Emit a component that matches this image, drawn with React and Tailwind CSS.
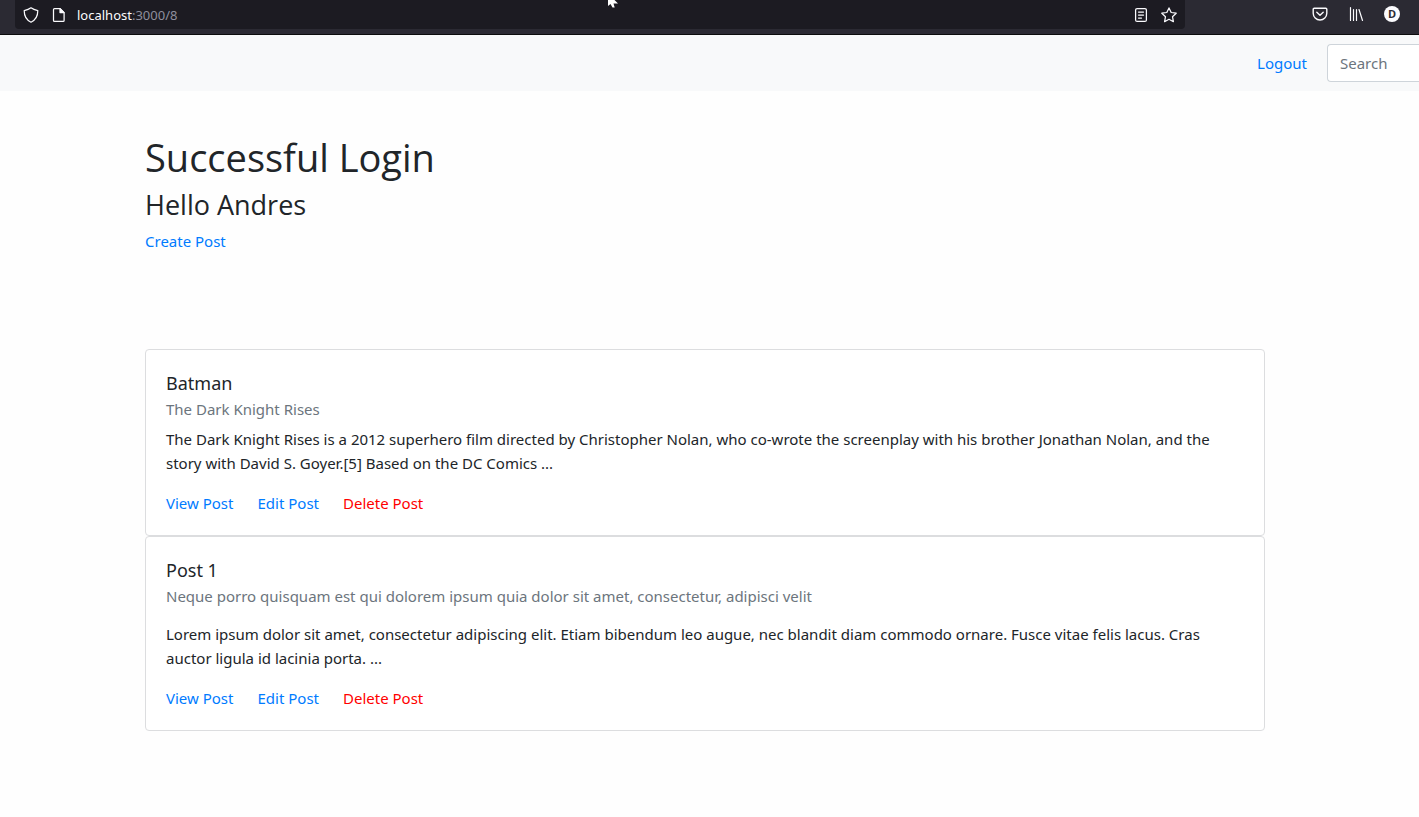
import React from "react";

const posts = [
  {
    title: "Batman",
    subtitle: "The Dark Knight Rises",
    body: "The Dark Knight Rises is a 2012 superhero film directed by Christopher Nolan, who co-wrote the screenplay with his brother Jonathan Nolan, and the story with David S. Goyer.[5] Based on the DC Comics ...",
    gap: "mt-2",
  },
  {
    title: "Post 1",
    subtitle:
      "Neque porro quisquam est qui dolorem ipsum quia dolor sit amet, consectetur, adipisci velit",
    body: "Lorem ipsum dolor sit amet, consectetur adipiscing elit. Etiam bibendum leo augue, nec blandit diam commodo ornare. Fusce vitae felis lacus. Cras auctor ligula id lacinia porta. ...",
    gap: "mt-4",
  },
];

function Icon({ children, ...props }) {
  return (
    <svg
      viewBox="0 0 16 16"
      className="size-4 shrink-0"
      fill="none"
      stroke="#fbfbfe"
      strokeWidth="1.25"
      strokeLinecap="round"
      strokeLinejoin="round"
      aria-hidden="true"
      {...props}
    >
      {children}
    </svg>
  );
}

function BrowserBar() {
  return (
    <header className="relative flex h-[35px] items-start border-b border-[#0c0c0d] bg-[#2b2a33] pl-[15px] pr-[19px]">
      <div className="flex h-[29px] grow items-center rounded-b bg-[#1c1b22] pl-2 pr-2">
        <Icon>
          <path d="M8 .8c2 1.500 4 2.200 6.800 2.800 0 5-1.800 9.400-6.800 11.600C3 13 1.200 8.600 1.200 3.600 4 3 6 2.300 8 .8z" />
        </Icon>
        <Icon className="ml-3 size-4 shrink-0">
          <path d="M3.500 1.600h5.600l4 4v7.800a1 1 0 0 1-1 1H3.500a1 1 0 0 1-1-1V2.600a1 1 0 0 1 1-1z" />
          <path d="M9 1.600v4h4z" fill="#fbfbfe" />
        </Icon>
        <span className="ml-2.5 font-['Noto_Sans','Open_Sans',sans-serif] text-[13px] text-[#8f8f9d]">
          <span className="text-[#fbfbfe]">localhost</span>:3000/8
        </span>
        <button type="button" aria-label="Reader view" className="ml-auto">
          <Icon>
            <rect x="2.600" y="1.600" width="10.800" height="12.800" rx="1.500" />
            <path d="M5.500 5h5M5.500 8h5M5.500 11h3" />
          </Icon>
        </button>
        <button type="button" aria-label="Bookmark page" className="ml-3">
          <Icon>
            <path d="M8 .9l2.200 4.600 5 .7-3.700 3.500.9 5L8 12.300l-4.400 2.400.9-5L.8 6.200l5-.7z" />
          </Icon>
        </button>
      </div>
      <div className="ml-[127px] flex h-7 items-center gap-5">
        <button type="button" aria-label="Save to Pocket">
          <Icon strokeWidth="1.400">
            <path d="M2.200 2.200h11.600a1 1 0 0 1 1 1v4a6.800 6.800 0 0 1-13.600 0v-4a1 1 0 0 1 1-1z" />
            <path d="M4.800 6.200L8 9.300l3.200-3.100" />
          </Icon>
        </button>
        <button type="button" aria-label="Library">
          <Icon strokeWidth="1.200">
            <path d="M2.500 1.500v13M5.500 3.500v11M8.500 3.500v11M11 3.500l3.500 11" />
          </Icon>
        </button>
        <button
          type="button"
          className="flex size-4 items-center justify-center rounded-full bg-[#fbfbfe] font-['Open_Sans',sans-serif] text-[11px] font-bold text-[#2b2a33]"
        >
          D
        </button>
      </div>
      <svg
        viewBox="0 0 12 8"
        className="absolute left-[607px] top-0 h-2 w-3"
        aria-hidden="true"
      >
        <path
          d="M1 0v6l2.500-2L5.500 7.500h2.200L6.500 3.500H11L7.500 0z"
          fill="#fff"
        />
      </svg>
    </header>
  );
}

function PostCard({ post }) {
  return (
    <article className="rounded border border-[#dcdddf] bg-white p-5">
      <h5 className="mb-1 text-[18px] leading-[26px]">{post.title}</h5>
      <h6 className="leading-[19px] text-[#6c757d]">{post.subtitle}</h6>
      <p className={post.gap}>{post.body}</p>
      <div className="mt-4 flex gap-6">
        <a href="#view" className="text-[#007bff]">View Post</a>
        <a href="#edit" className="text-[#007bff]">Edit Post</a>
        <a href="#delete" className="text-[#ff0000]">Delete Post</a>
      </div>
    </article>
  );
}

export default function App() {
  return (
    <div className="min-h-screen bg-[#fefefe] font-['Noto_Sans','Open_Sans',sans-serif] text-[15px] leading-6 text-[#212529]">
      <BrowserBar />
      <nav className="flex h-14 items-center justify-end overflow-hidden bg-[#f8f9fa]">
        <a href="#logout" className="mr-5 text-[#007bff]">Logout</a>
        <input
          type="search"
          aria-label="Search"
          placeholder="Search"
          className="h-[38px] w-[92px] rounded-l border border-r-0 border-[#ced4da] bg-white px-3 placeholder:text-[#6c757d]"
        />
      </nav>
      <main className="ml-[145px] mr-[154px] pt-[42px]">
        <h1 className="font-['Open_Sans','Noto_Sans',sans-serif] text-[38px] leading-12">Successful Login</h1>
        <h2 className="mt-1.5 font-['Open_Sans','Noto_Sans',sans-serif] text-[27px] leading-9">Hello Andres</h2>
        <a href="#create" className="mt-1.5 inline-block text-[#007bff]">Create Post</a>
        <section className="mt-24">
          {posts.map((post) => (
            <PostCard key={post.title} post={post} />
          ))}
        </section>
      </main>
    </div>
  );
}
